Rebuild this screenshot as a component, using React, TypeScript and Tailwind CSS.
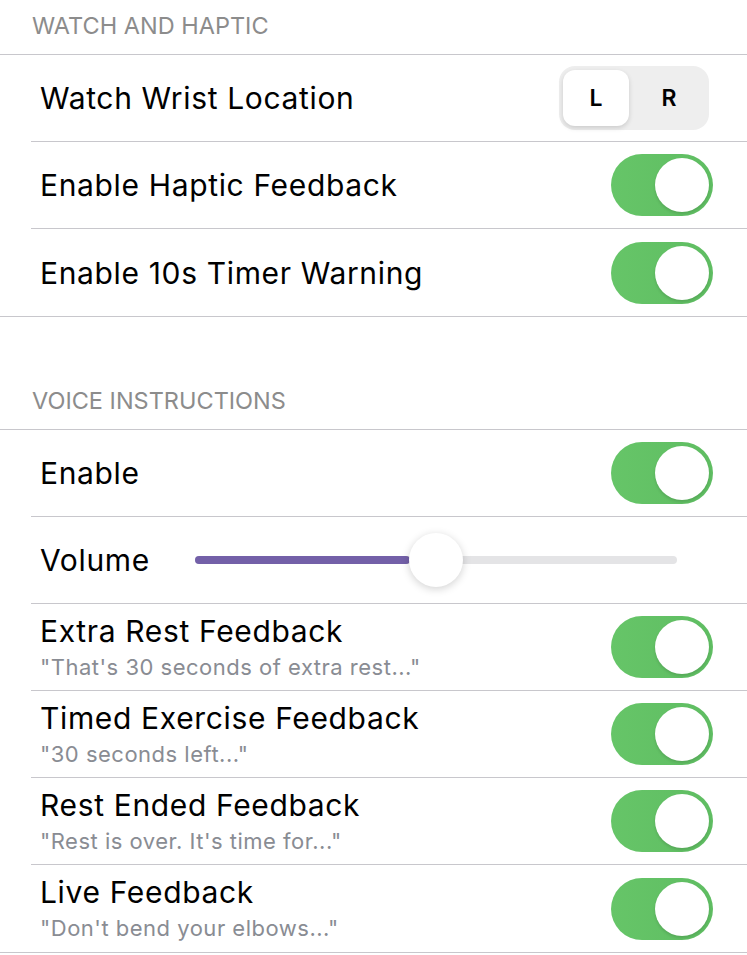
import React from "react";

const font = { fontFamily: "Inter, 'Noto Sans', sans-serif" };

function Toggle() {
  return (
    <div className="relative h-[62px] w-[102px] rounded-full bg-gradient-to-r from-[#66c568] to-[#5fbd62]">
      <div className="absolute right-[4px] top-[4px] h-[54px] w-[54px] rounded-full bg-white shadow-[0_2px_3px_rgba(0,0,0,0.12)]" />
    </div>
  );
}

function Segmented() {
  return (
    <div className="flex h-[64px] w-[150px] items-center rounded-[16px] bg-[#eeeeee] p-[4px]">
      <div className="flex h-[56px] w-[66px] items-center justify-center rounded-[12px] bg-white text-[23px] font-semibold text-black shadow-[0_2px_5px_rgba(0,0,0,0.15)]">
        L
      </div>
      <div className="flex flex-1 items-center justify-center pl-[4px] text-[23px] font-semibold text-black">R</div>
    </div>
  );
}

function Slider() {
  return (
    <div className="relative flex h-[8px] w-[482px] rounded-full bg-[#e4e4e6]">
      <div className="h-full w-[215px] rounded-full bg-[#7360a8]" />
      <div className="absolute left-[214px] top-1/2 h-[54px] w-[54px] -translate-y-1/2 rounded-full bg-white shadow-[0_2px_8px_rgba(0,0,0,0.18)]" />
    </div>
  );
}

function Row({
  title,
  sub,
  last,
  children,
}: {
  title: string;
  sub?: string;
  last?: boolean;
  children?: React.ReactNode;
}) {
  return (
    <div className="pl-[31px]">
      <div
        className={`flex h-[87px] items-center pl-[9px] pr-[34px] ${last ? "" : "border-b border-[#c8c7cc]"}`}
      >
        <div className="flex flex-1 flex-col">
          <span className="text-[30px] leading-[34px] tracking-[0.65px] text-black">{title}</span>
          {sub && (
            <span className="mt-[5px] text-[22px] leading-[28px] tracking-[0.5px] text-[#898c93]">{sub}</span>
          )}
        </div>
        {children}
      </div>
    </div>
  );
}

function Header({ label }: { label: string }) {
  return (
    <div className="flex h-[54px] items-center pb-[2px] pl-[32px] text-[23.5px] text-[#8c8c8c]">
      {label}
    </div>
  );
}

export default function App() {
  return (
    <div className="min-h-[955px] w-[747px] bg-white" style={font}>
      <Header label="WATCH AND HAPTIC" />
      <div className="border-y border-[#c8c7cc]">
        <Row title="Watch Wrist Location">
          <div className="mr-[4px]">
            <Segmented />
          </div>
        </Row>
        <Row title="Enable Haptic Feedback">
          <Toggle />
        </Row>
        <Row title="Enable 10s Timer Warning" last>
          <Toggle />
        </Row>
      </div>

      <div className="mt-[58px]">
        <Header label="VOICE INSTRUCTIONS" />
      </div>
      <div className="border-y border-[#c8c7cc]">
        <Row title="Enable">
          <Toggle />
        </Row>
        <div className="pl-[31px]">
          <div className="flex h-[87px] items-center border-b border-[#c8c7cc] pl-[9px]">
            <span className="w-[155px] text-[30px] tracking-[0.65px] text-black">Volume</span>
            <Slider />
          </div>
        </div>
        <Row title="Extra Rest Feedback" sub={"\"That's 30 seconds of extra rest...\""}>
          <Toggle />
        </Row>
        <Row title="Timed Exercise Feedback" sub={"\"30 seconds left...\""}>
          <Toggle />
        </Row>
        <Row title="Rest Ended Feedback" sub={"\"Rest is over. It's time for...\""}>
          <Toggle />
        </Row>
        <Row title="Live Feedback" sub={"\"Don't bend your elbows...\""} last>
          <Toggle />
        </Row>
      </div>
    </div>
  );
}
